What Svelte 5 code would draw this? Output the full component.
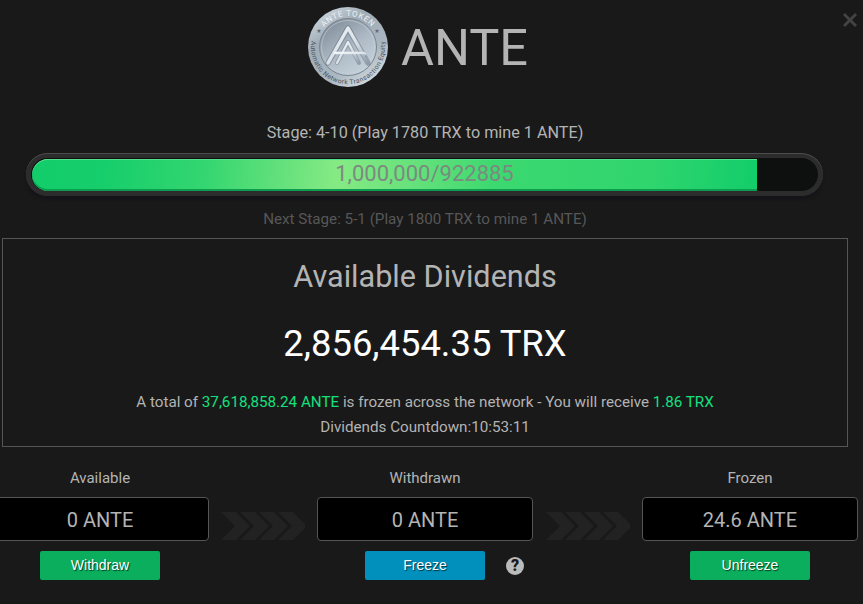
<script>
  const stats = [
    { label: 'Available', value: '0 ANTE', action: 'Withdraw', tone: 'green' },
    { label: 'Withdrawn', value: '0 ANTE', action: 'Freeze', tone: 'blue', help: true },
    { label: 'Frozen', value: '24.6 ANTE', action: 'Unfreeze', tone: 'green' }
  ];
  const chevrons = [0, 1, 2, 3];
</script>

<div class="page">
  <button class="close" aria-label="Close">
    <svg width="16" height="16" viewBox="0 0 16 16"><path d="M3 1 8 6l5-5 2 2-5 5 5 5-2 2-5-5-5 5-2-2 5-5-5-5z" fill="#434343" /></svg>
  </button>

  <header class="brand">
    <svg class="coin" width="82" height="82" viewBox="0 0 82 82">
      <defs>
        <linearGradient id="rim" x1="0.15" y1="0" x2="0.85" y2="1">
          <stop offset="0" stop-color="#d3dce3" />
          <stop offset="0.3" stop-color="#a0acb6" />
          <stop offset="0.65" stop-color="#a9b5bf" />
          <stop offset="1" stop-color="#d8e0e6" />
        </linearGradient>
        <linearGradient id="face" x1="0.1" y1="0" x2="0.8" y2="1">
          <stop offset="0" stop-color="#7c8894" />
          <stop offset="0.55" stop-color="#aebbc6" />
          <stop offset="1" stop-color="#c8d3dc" />
        </linearGradient>
        <linearGradient id="steel" x1="0" y1="0" x2="1" y2="1">
          <stop offset="0" stop-color="#f2f6f9" />
          <stop offset="0.6" stop-color="#d4dde4" />
          <stop offset="1" stop-color="#8f9ca8" />
        </linearGradient>
        <path id="arcTop" d="M10 41a31 31 0 0 1 62 0" />
        <path id="arcBottom" d="M5.3 31.4A37 37 0 1 0 76.7 31.4" />
      </defs>
      <circle cx="41" cy="41" r="40" fill="url(#rim)" />
      <circle cx="41" cy="41" r="28.5" fill="url(#face)" stroke="#7a8691" stroke-width="1" />
      <circle cx="41" cy="41" r="26.5" fill="none" stroke="#c8d2da" stroke-width="0.8" opacity="0.7" />
      <text class="coin-top"><textPath href="#arcTop" startOffset="50%" text-anchor="middle">ANTE TOKEN</textPath></text>
      <text class="coin-bottom"><textPath href="#arcBottom" startOffset="50%" text-anchor="middle">Automatic Network Transaction Equity</textPath></text>
      <text class="coin-star" x="12" y="27" text-anchor="middle">★</text>
      <text class="coin-star" x="70" y="27" text-anchor="middle">★</text>
      <g fill="none" stroke-linejoin="round" stroke-linecap="round">
        <path d="M21 57 41 22 61 57" stroke="#5d6974" stroke-width="5.5" opacity="0.45" />
        <path d="M21 57 41 22 61 57" stroke="url(#steel)" stroke-width="3.4" />
        <path d="M30 57 41 36 52 57" stroke="#5d6974" stroke-width="4" opacity="0.4" />
        <path d="M30 57 41 36 52 57" stroke="url(#steel)" stroke-width="2.4" />
        <path d="M28 47H56Q58 47 59 50" stroke="url(#steel)" stroke-width="2.4" />
      </g>
    </svg>
    <h1>ANTE</h1>
  </header>

  <p class="stage">Stage: 4-10 (Play 1780 TRX to mine 1 ANTE)</p>
  <div class="track">
    <div class="fill" style="width: {725}px"></div>
    <span class="count">1,000,000/922885</span>
  </div>
  <p class="next">Next Stage: 5-1 (Play 1800 TRX to mine 1 ANTE)</p>

  <section class="dividends">
    <h2>Available Dividends</h2>
    <div class="amount">2,856,454.35 TRX</div>
    <p>A total of <em>37,618,858.24 ANTE</em> is frozen across the network - You will receive <em>1.86 TRX</em></p>
    <p>Dividends Countdown:10:53:11</p>
  </section>

  <div class="stats">
    {#each stats as s, i}
      {#if i > 0}
        <div class="arrows" class:wide={i === 2}>
          <svg width="84" height="28" viewBox="0 0 84 28">
            {#each chevrons as c}
              <path d="M{c * 19} 0h15l14 14-14 14h-15l14-14z" fill="#222" />
            {/each}
          </svg>
        </div>
      {/if}
      <div class="stat" class:first={i === 0}>
        <div class="label">{s.label}</div>
        <div class="value">{s.value}</div>
        <div class="action">
          <button class={s.tone}>{s.action}</button>
          {#if s.help}<span class="help">?</span>{/if}
        </div>
      </div>
    {/each}
  </div>
</div>

<style>
  :global(body) {
    margin: 0;
    background: #191919;
  }
  .page {
    position: relative;
    width: 863px;
    height: 604px;
    overflow: hidden;
    background: #191919;
    color: #b4b4b4;
    font-family: Roboto, sans-serif;
    font-size: 15px;
  }
  .close {
    position: absolute;
    top: 12px;
    right: 5px;
    padding: 0;
    border: 0;
    background: none;
    line-height: 0;
  }
  .brand {
    display: flex;
    justify-content: center;
    align-items: center;
    gap: 12px;
    height: 94px;
    padding-right: 28px;
  }
  .coin-top {
    font: 8px Roboto, sans-serif;
    letter-spacing: 0.7px;
    fill: #eef2f5;
  }
  .coin-bottom {
    font: 6.6px Roboto, sans-serif;
    letter-spacing: 0.45px;
    fill: #47525c;
  }
  .coin-star {
    font: 6px "DejaVu Sans", sans-serif;
    fill: #5f6a75;
  }
  h1 {
    margin: 0;
    font-size: 50.5px;
    font-weight: 400;
    color: #b4b4b4;
  }
  .stage {
    width: 850px;
    margin: 29px 0 10px;
    text-align: center;
    font-size: 16.2px;
    line-height: 20px;
  }
  .track {
    position: relative;
    box-sizing: border-box;
    width: 797px;
    height: 43px;
    margin-left: 26px;
    padding: 6px;
    border-radius: 22px;
    background: #0e100f;
    box-shadow:
      inset 0 1px 0 #4c4c4c,
      inset 0 0 0 5px #2c2c2c,
      inset 0 -4px 0 #333,
      0 3px 3px #14141a;
  }
  .fill {
    height: 32px;
    border-radius: 16px 0 0 16px;
    background: linear-gradient(95deg, #12cd6a 0%, #16ce6b 10%, #34d670 24%, #62e07b 34%, #86ea84 42%, #68e27c 52%, #3cd870 64%, #30d56e 85%, #12cd6a 100%);
    box-shadow: inset 0 1px 0 #55e08e, inset 0 -2px 0 #0c9d50;
  }
  .count {
    position: absolute;
    inset: 0 0 3px;
    display: flex;
    justify-content: center;
    align-items: center;
    font-size: 22px;
    color: #7c8a7f;
  }
  .next {
    width: 850px;
    margin: 13px 0 9px;
    text-align: center;
    color: #575757;
    font-size: 15.2px;
    line-height: 20px;
  }
  .dividends {
    box-sizing: border-box;
    width: 846px;
    height: 209px;
    margin-left: 2px;
    border: 1px solid #555;
    text-align: center;
  }
  h2 {
    margin: 21px 0 0;
    font-size: 30.6px;
    line-height: 34px;
    font-weight: 400;
  }
  .amount {
    margin: 29px 0 25px;
    font-size: 36.4px;
    line-height: 42px;
    font-weight: 400;
    color: #fff;
  }
  .dividends p {
    margin: 0;
    font-size: 15.2px;
    line-height: 25px;
  }
  em {
    font-style: normal;
    color: #14e07f;
  }
  .stats {
    display: flex;
    margin: 21px 0 0 -9px;
  }
  .stat {
    width: 216px;
    flex: none;
    text-align: center;
  }
  .stat.first {
    width: 218px;
  }
  .label {
    font-size: 15px;
    line-height: 20px;
  }
  .value {
    box-sizing: border-box;
    height: 44px;
    margin-top: 9px;
    border: 1px solid #555;
    border-radius: 4px;
    background: #000;
    font-size: 20px;
    line-height: 44px;
    color: #b4b4b4;
  }
  .arrows {
    width: 108px;
    flex: none;
    display: flex;
    justify-content: center;
    padding-top: 44px;
    box-sizing: border-box;
  }
  .arrows.wide {
    width: 109px;
  }
  .action {
    position: relative;
    margin-top: 10px;
    line-height: 0;
  }
  button.green,
  button.blue {
    width: 120px;
    height: 29px;
    padding: 0 0 2px;
    border: 0;
    border-radius: 2px;
    color: #fff;
    font-family: "Liberation Sans", sans-serif;
    font-size: 14px;
    font-weight: 400;
    text-shadow: 1px 1px 1px rgba(0, 0, 0, 0.65);
  }
  .green {
    background: #0aae5c;
  }
  .blue {
    background: #0090bb;
  }
  .help {
    position: absolute;
    top: 6px;
    left: 189px;
    width: 18px;
    height: 18px;
    border-radius: 50%;
    background: #bbb;
    color: #191919;
    font-size: 16px;
    font-weight: 900;
    line-height: 18px;
  }
</style>
